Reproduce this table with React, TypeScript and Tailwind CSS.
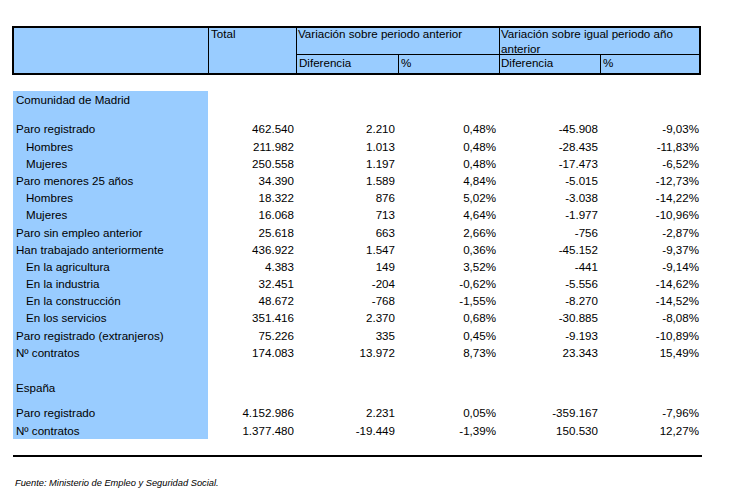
import React from 'react';

type Row = {
  label: string;
  indent?: boolean;
  values: string[];
};

const madrid: Row[] = [
  { label: 'Paro registrado', values: ['462.540', '2.210', '0,48%', '-45.908', '-9,03%'] },
  { label: 'Hombres', indent: true, values: ['211.982', '1.013', '0,48%', '-28.435', '-11,83%'] },
  { label: 'Mujeres', indent: true, values: ['250.558', '1.197', '0,48%', '-17.473', '-6,52%'] },
  { label: 'Paro menores 25 años', values: ['34.390', '1.589', '4,84%', '-5.015', '-12,73%'] },
  { label: 'Hombres', indent: true, values: ['18.322', '876', '5,02%', '-3.038', '-14,22%'] },
  { label: 'Mujeres', indent: true, values: ['16.068', '713', '4,64%', '-1.977', '-10,96%'] },
  { label: 'Paro sin empleo anterior', values: ['25.618', '663', '2,66%', '-756', '-2,87%'] },
  { label: 'Han trabajado anteriormente', values: ['436.922', '1.547', '0,36%', '-45.152', '-9,37%'] },
  { label: 'En la agricultura', indent: true, values: ['4.383', '149', '3,52%', '-441', '-9,14%'] },
  { label: 'En la industria', indent: true, values: ['32.451', '-204', '-0,62%', '-5.556', '-14,62%'] },
  { label: 'En la construcción', indent: true, values: ['48.672', '-768', '-1,55%', '-8.270', '-14,52%'] },
  { label: 'En los servicios', indent: true, values: ['351.416', '2.370', '0,68%', '-30.885', '-8,08%'] },
  { label: 'Paro registrado (extranjeros)', values: ['75.226', '335', '0,45%', '-9.193', '-10,89%'] },
  { label: 'Nº contratos', values: ['174.083', '13.972', '8,73%', '23.343', '15,49%'] },
];

const espana: Row[] = [
  { label: 'Paro registrado', values: ['4.152.986', '2.231', '0,05%', '-359.167', '-7,96%'] },
  { label: 'Nº contratos', values: ['1.377.480', '-19.449', '-1,39%', '150.530', '12,27%'] },
];

// number columns: Total, Diferencia, %, Diferencia, %
const numCols = ['w-[88px] pr-[2px]', 'w-[102px] pr-[3px]', 'w-[101px] pr-[3px]', 'w-[101px] pr-[2px]', 'w-[101px] pr-[2px]'];

function DataRow({ row }: { row: Row }) {
  return (
    <div className="flex h-[17.2px] leading-[17.2px]">
      <div className={`w-[195px] bg-[#99ccff] ${row.indent ? 'pl-[13px]' : 'pl-[3px]'}`}>{row.label}</div>
      {row.values.map((v, i) => (
        <div key={i} className={`${numCols[i]} text-right`}>
          {v}
        </div>
      ))}
    </div>
  );
}

function Spacer({ h }: { h: string }) {
  return (
    <div className={`flex ${h}`}>
      <div className="w-[195px] bg-[#99ccff]" />
    </div>
  );
}

function Title({ text }: { text: string }) {
  return (
    <div className="flex h-[17.2px] leading-[17.2px]">
      <div className="w-[195px] bg-[#99ccff] pl-[3px]">{text}</div>
    </div>
  );
}

export default function App() {
  return (
    <div className="w-[744px] h-[501px] bg-white overflow-hidden text-black text-[11.6px] font-['Liberation_Sans',Arial,sans-serif]">
      <div className="pt-[26px] pl-[12px]">
        {/* Header */}
        <div className="w-[689px] flex border-2 border-black bg-[#99ccff] leading-[15px]">
          <div className="w-[194px] h-[45px]" />
          <div className="w-[88px] border-l border-black pl-[2px]">
            <div className="-mt-[2px]">Total</div>
          </div>
          <div className="w-[203px] border-l border-black flex flex-col">
            <div className="h-[27px] border-b border-black pl-[1px]">
              <div className="-mt-[2px]">Variación sobre periodo anterior</div>
            </div>
            <div className="h-[18px] flex">
              <div className="w-[101px] pl-[2px]">Diferencia</div>
              <div className="w-[101px] border-l border-black pl-[2px]">%</div>
            </div>
          </div>
          <div className="w-[200px] border-l border-black flex flex-col">
            <div className="h-[27px] border-b border-black pl-[1px]">
              <div className="-mt-[2px]">Variación sobre igual periodo año anterior</div>
            </div>
            <div className="h-[18px] flex">
              <div className="w-[100px] pl-[1px]">Diferencia</div>
              <div className="w-[99px] border-l border-black pl-[2px]">%</div>
            </div>
          </div>
        </div>

        {/* Body */}
        <div className="mt-[16px] pl-[1px]">
          <Title text="Comunidad de Madrid" />
          <Spacer h="h-[12.2px]" />
          {madrid.map((r, i) => (
            <DataRow key={i} row={r} />
          ))}
          <Spacer h="h-[17.5px]" />
          <Title text="España" />
          <Spacer h="h-[8.8px]" />
          {espana.map((r, i) => (
            <DataRow key={i} row={r} />
          ))}
        </div>

        <div className="mt-[16px] ml-[1px] w-[689px] h-[2px] bg-black" />

        <div className="mt-[20px] ml-[3px] text-[9.3px] leading-[12px] italic">
          Fuente: Ministerio de Empleo y Seguridad Social.
        </div>
      </div>
    </div>
  );
}
